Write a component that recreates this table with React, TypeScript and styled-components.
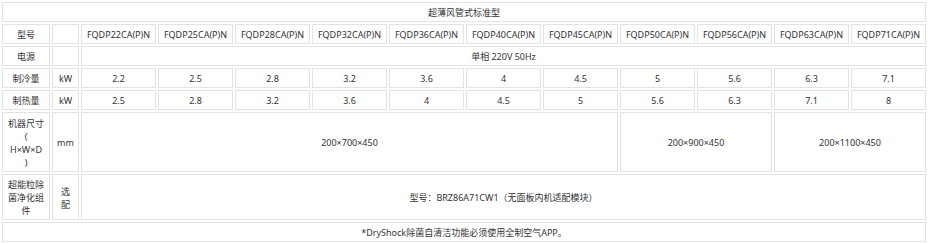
import React from 'react';
import styled, { createGlobalStyle } from 'styled-components';

const GlobalStyle = createGlobalStyle`
  body {
    margin: 0;
    background: #ffffff;
    font-family: "Noto Sans", "Noto Sans CJK SC", sans-serif;
  }
`;

const Table = styled.table`
  border-collapse: separate;
  border-spacing: 2px;
  table-layout: fixed;
  width: 928px;
  font-size: 9px;
  color: #333333;
`;

const Col = styled.col<{ $w?: number }>`
  width: ${(p) => (p.$w ? `${p.$w}px` : 'auto')};
`;

const Row = styled.tr<{ $h?: number }>`
  height: ${(p) => (p.$h ? `${p.$h}px` : 'auto')};
`;

const Cell = styled.td`
  border: 1px solid #e3e3e3;
  padding: 3px 4px 2px;
  line-height: 13px;
  text-align: center;
  vertical-align: middle;
  white-space: normal;
`;

const models = ['22', '25', '28', '32', '36', '40', '45', '50', '56', '63', '71'];
const cooling = ['2.2', '2.5', '2.8', '3.2', '3.6', '4', '4.5', '5', '5.6', '6.3', '7.1'];
const heating = ['2.5', '2.8', '3.2', '3.6', '4', '4.5', '5', '5.6', '6.3', '7.1', '8'];

const App: React.FC = () => {
  return (
    <>
      <GlobalStyle />
      <Table>
        <colgroup>
          <Col $w={48} />
          <Col $w={27} />
          {models.map((m) => (
            <Col key={m} />
          ))}
        </colgroup>
        <tbody>
          <Row>
            <Cell colSpan={13}>超薄风管式标准型</Cell>
          </Row>
          <Row>
            <Cell>型号</Cell>
            <Cell></Cell>
            {models.map((m) => (
              <Cell key={m}>FQDP{m}CA(P)N</Cell>
            ))}
          </Row>
          <Row>
            <Cell>电源</Cell>
            <Cell></Cell>
            <Cell colSpan={11}>单相 220V 50Hz</Cell>
          </Row>
          <Row>
            <Cell>制冷量</Cell>
            <Cell>kW</Cell>
            {cooling.map((v, i) => (
              <Cell key={i}>{v}</Cell>
            ))}
          </Row>
          <Row>
            <Cell>制热量</Cell>
            <Cell>kW</Cell>
            {heating.map((v, i) => (
              <Cell key={i}>{v}</Cell>
            ))}
          </Row>
          <Row $h={60}>
            <Cell>
              机器尺寸
              <br />(<br />H×W×D
              <br />)
            </Cell>
            <Cell>mm</Cell>
            <Cell colSpan={7}>200×700×450</Cell>
            <Cell colSpan={2}>200×900×450</Cell>
            <Cell colSpan={2}>200×1100×450</Cell>
          </Row>
          <Row>
            <Cell>超能粒除菌净化组件</Cell>
            <Cell>选配</Cell>
            <Cell colSpan={11}>型号：BRZ86A71CW1（无面板内机适配模块）</Cell>
          </Row>
          <Row>
            <Cell colSpan={13}>*DryShock除菌自清洁功能必须使用全制空气APP。</Cell>
          </Row>
        </tbody>
      </Table>
    </>
  );
};

export default App;
